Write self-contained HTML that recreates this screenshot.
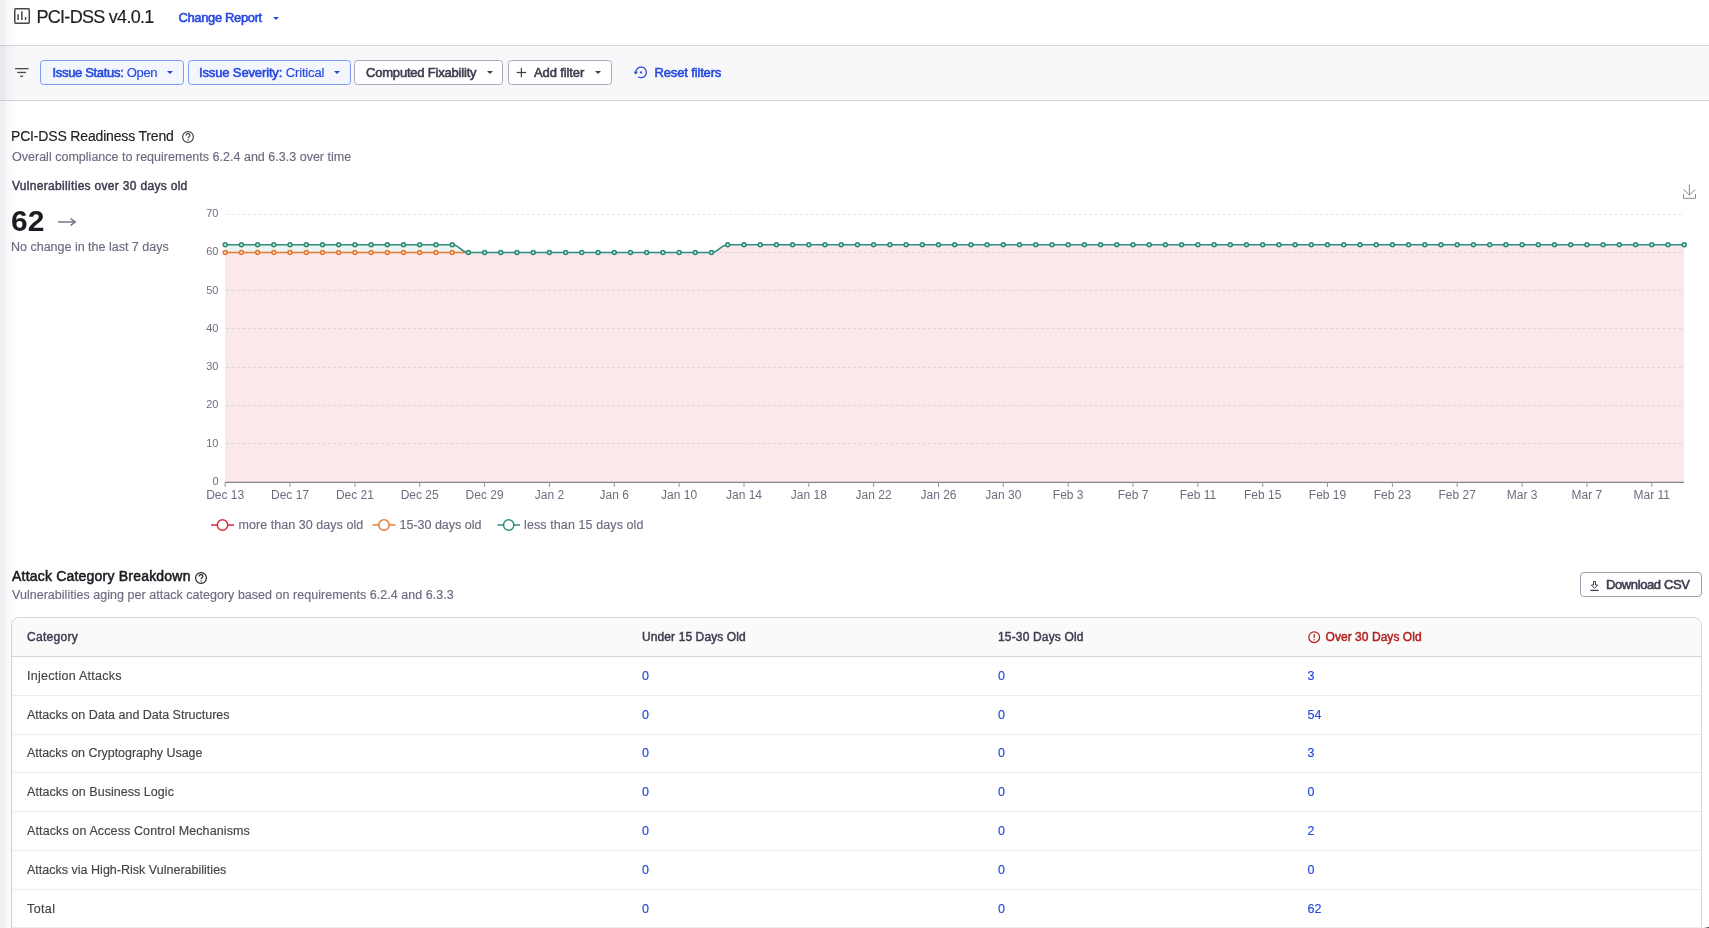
<!DOCTYPE html>
<html><head><meta charset="utf-8">
<style>
html,body{margin:0;padding:0;}
body{width:1709px;height:928px;overflow:hidden;background:#fff;position:relative;font-family:"Liberation Sans",sans-serif;}
#root{position:absolute;left:0;top:0;width:1709px;height:928px;overflow:hidden;will-change:transform;}
.t{position:absolute;white-space:nowrap;line-height:1;}
.shadow{position:absolute;left:0;top:0;width:18px;height:928px;background:linear-gradient(to right,rgba(70,60,110,0.06),rgba(70,60,110,0.09) 2.5px,rgba(70,60,110,0.045) 6px,rgba(70,60,110,0) 17px);z-index:50;}
.hdr{position:absolute;left:0;top:0;width:1709px;height:45px;background:#fff;border-bottom:1px solid #d8d8e0;}
.fbar{position:absolute;left:0;top:46px;width:1709px;height:54px;background:#f8f8fa;border-bottom:1px solid #d6d5de;}
.chip{position:absolute;top:60px;height:23px;border:1px solid #a9a8b8;border-radius:3.5px;background:#fff;box-sizing:content-box;}
.chip.b{border-color:#7c9cf2;background:#f3f6ff;}
.tri{position:absolute;width:0;height:0;border-left:3px solid transparent;border-right:3px solid transparent;border-top:3px solid #3d3c50;}
.tri.bl{border-top-color:#2448e0;}
.ct{font-size:13px;color:#3c3b4e;font-weight:bold;top:65.5px;}
.ct.bl{color:#2448e0;}
.sub{font-size:12.5px;color:#6b6a80;}
svg{position:absolute;left:0;top:0;}
.tbl{position:absolute;left:11px;top:617px;width:1689px;height:400px;border:1px solid #d5d4df;border-radius:8px;overflow:hidden;}
.th{position:absolute;left:0;top:0;width:1689px;height:38px;background:#fafafb;border-bottom:1px solid #d5d4df;}
.rl{position:absolute;left:0;width:1689px;height:1px;background:#ededf1;}
.cell{font-size:12.5px;color:#444447;}
.num{font-size:12.5px;color:#2448e0;}
.hd{font-size:12px;font-weight:bold;color:#3c3b4e;}
.m{font-weight:normal !important;-webkit-text-stroke:0.55px currentColor;}
.m span{-webkit-text-stroke:0.15px currentColor;}
.hd.m,#t15{-webkit-text-stroke:0.45px currentColor;}
.sub,.cell,.num,#t13,#t1{-webkit-text-stroke:0.15px currentColor;}
#t1{letter-spacing:-0.712px}#t2{letter-spacing:-0.373px}#t4{letter-spacing:-0.325px}#t6{letter-spacing:-0.137px}#t8{letter-spacing:-0.200px}#t10{letter-spacing:-0.114px}#t12{letter-spacing:-0.148px}#t13{letter-spacing:-0.168px}#t15{letter-spacing:0.311px}#t21{letter-spacing:0.204px}#t23{letter-spacing:-0.393px}#t24{letter-spacing:0.280px}#t25{letter-spacing:0.102px}#t26{letter-spacing:0.159px}#t27{letter-spacing:0.049px}#t14{letter-spacing:0.014px}#t16{letter-spacing:0.000px}#t17{letter-spacing:-0.004px}#t18{letter-spacing:0.050px}#t19{letter-spacing:-0.003px}#t20{letter-spacing:0.100px}#t22{letter-spacing:0.029px}#t28{letter-spacing:0.262px}#t32{letter-spacing:-0.012px}#t36{letter-spacing:-0.036px}#t40{letter-spacing:0.042px}#t44{letter-spacing:0.114px}#t48{letter-spacing:0.012px}#t52{letter-spacing:0.400px}
</style></head>
<body>
<div id="root">
<div class="hdr"></div>
<div class="fbar"></div>

<!-- header -->
<svg width="40" height="40" style="left:0;top:0">
  <rect x="14.75" y="8.75" width="14.5" height="14.5" rx="1" fill="none" stroke="#464646" stroke-width="1.5"/>
  <rect x="17.3" y="14.2" width="1.5" height="5.8" fill="#464646"/>
  <rect x="21.1" y="11.3" width="1.5" height="8.7" fill="#464646"/>
  <rect x="24.8" y="16.9" width="1.5" height="3.1" fill="#464646"/>
</svg>
<div id="t1" class="t" style="left:36.5px;top:8px;font-size:18px;color:#1b1b22;">PCI-DSS v4.0.1</div>
<div id="t2" class="t m" style="left:178.5px;top:10.5px;font-size:13px;font-weight:bold;color:#2448e0;">Change Report</div>
<div id="t3" class="tri bl" style="left:272.5px;top:16.5px;"></div>

<!-- filter bar -->
<svg width="40" height="100" style="left:0;top:0">
  <rect x="15" y="68" width="13.6" height="1.3" fill="#4a4a4a"/>
  <rect x="17.2" y="71.8" width="8.8" height="1.3" fill="#4a4a4a"/>
  <rect x="20.1" y="75.6" width="3" height="1.3" fill="#4a4a4a"/>
</svg>
<div class="chip b" style="left:40px;width:142px;"></div>
<div id="t4" class="t ct bl m" style="left:52.5px;">Issue Status: <span>Open</span></div>
<div id="t5" class="tri bl" style="left:167px;top:70.8px;"></div>

<div class="chip b" style="left:188px;width:161px;"></div>
<div id="t6" class="t ct bl m" style="left:199px;">Issue Severity: <span>Critical</span></div>
<div id="t7" class="tri bl" style="left:334px;top:70.8px;"></div>

<div class="chip" style="left:354px;width:147px;"></div>
<div id="t8" class="t ct m" style="left:366px;">Computed Fixability</div>
<div id="t9" class="tri" style="left:487px;top:70.8px;"></div>

<div class="chip" style="left:508px;width:102px;"></div>
<svg width="20" height="20" style="left:512px;top:62px">
  <rect x="4.7" y="9.9" width="9.4" height="1.2" fill="#3d3c50"/>
  <rect x="8.8" y="5.8" width="1.2" height="9.4" fill="#3d3c50"/>
</svg>
<div id="t10" class="t ct m" style="left:534px;">Add filter</div>
<div id="t11" class="tri" style="left:595px;top:70.8px;"></div>

<svg width="20" height="20" style="left:632px;top:62px">
  <path d="M3.8,10.4 A5.3,5.3 0 1 1 6.06,14.74" fill="none" stroke="#2448e0" stroke-width="1.3"/>
  <path d="M1.6,9.7 L6,9.7 L3.8,12.6 Z" fill="#2448e0"/>
  <circle cx="9.1" cy="10.4" r="1.1" fill="#2448e0"/>
</svg>
<div id="t12" class="t ct bl m" style="left:654.5px;">Reset filters</div>

<!-- section 1 -->
<div id="t13" class="t" style="left:11px;top:129px;font-size:14px;color:#1b1b22;">PCI-DSS Readiness Trend</div>
<svg width="30" height="30" style="left:173px;top:122px">
  <circle cx="15" cy="15" r="5.4" fill="none" stroke="#444" stroke-width="1.2"/>
  <path d="M13.1,13.6 C13.1,12.3 14,11.7 15,11.7 C16,11.7 16.9,12.3 16.9,13.3 C16.9,14.6 15.1,14.7 15.1,16.3" fill="none" stroke="#444" stroke-width="1.2"/>
  <rect x="14.5" y="17.3" width="1.2" height="1.2" fill="#444"/>
</svg>
<div id="t14" class="t sub" style="left:12px;top:150.5px;">Overall compliance to requirements 6.2.4 and 6.3.3 over time</div>
<div id="t15" class="t m" style="left:12px;top:179.5px;font-size:12px;font-weight:bold;color:#3d3c4f;">Vulnerabilities over 30 days old</div>
<div id="t16" class="t" style="left:11px;top:206px;font-size:30px;font-weight:bold;color:#1b1b22;">62</div>
<svg width="30" height="20" style="left:50px;top:212px">
  <rect x="8" y="9.3" width="16" height="1.4" fill="#6b6a80"/>
  <path d="M20.5,6.5 L25.2,10 L20.5,13.5" fill="none" stroke="#6b6a80" stroke-width="1.4"/>
</svg>
<div id="t17" class="t sub" style="left:11px;top:240.5px;">No change in the last 7 days</div>

<svg width="1709" height="560" style="left:0;top:0">
  <g stroke="#e3e5f2" stroke-width="1" stroke-dasharray="3,2.36"><line x1="225.9" x2="1684" y1="443.5" y2="443.5"/><line x1="225.9" x2="1684" y1="405.5" y2="405.5"/><line x1="225.9" x2="1684" y1="367.5" y2="367.5"/><line x1="225.9" x2="1684" y1="328.5" y2="328.5"/><line x1="225.9" x2="1684" y1="290.5" y2="290.5"/><line x1="225.9" x2="1684" y1="252.5" y2="252.5"/><line x1="225.9" x2="1684" y1="214.5" y2="214.5"/></g>
  <path d="M225.2,244.81L452.15,244.81C459.45,244.81,461.07,252.46,468.36,252.46L225.2,252.46Z" fill="#2e8d7b" fill-opacity="0.1"/>
  <path d="M225.2,252.46L711.53,252.46C718.82,252.46,720.45,244.81,727.74,244.81L1684.19,244.81L1684.19,482L225.2,482Z" fill="#d92a3c" fill-opacity="0.11"/>
  <g fill="#6e6d80" font-family="Liberation Sans" font-size="11" text-anchor="end"><text x="218.5" y="484.8">0</text><text x="218.5" y="446.5">10</text><text x="218.5" y="408.3">20</text><text x="218.5" y="370.0">30</text><text x="218.5" y="331.8">40</text><text x="218.5" y="293.5">50</text><text x="218.5" y="255.3">60</text><text x="218.5" y="217.0">70</text></g>
  <line x1="225" x2="1684" y1="482.4" y2="482.4" stroke="#84828f" stroke-width="1.1"/>
  <g stroke="#9795a1" stroke-width="1"><line x1="225.2" x2="225.2" y1="482" y2="487"/><line x1="290.0" x2="290.0" y1="482" y2="487"/><line x1="354.9" x2="354.9" y1="482" y2="487"/><line x1="419.7" x2="419.7" y1="482" y2="487"/><line x1="484.6" x2="484.6" y1="482" y2="487"/><line x1="549.4" x2="549.4" y1="482" y2="487"/><line x1="614.3" x2="614.3" y1="482" y2="487"/><line x1="679.1" x2="679.1" y1="482" y2="487"/><line x1="744.0" x2="744.0" y1="482" y2="487"/><line x1="808.8" x2="808.8" y1="482" y2="487"/><line x1="873.6" x2="873.6" y1="482" y2="487"/><line x1="938.5" x2="938.5" y1="482" y2="487"/><line x1="1003.3" x2="1003.3" y1="482" y2="487"/><line x1="1068.2" x2="1068.2" y1="482" y2="487"/><line x1="1133.0" x2="1133.0" y1="482" y2="487"/><line x1="1197.9" x2="1197.9" y1="482" y2="487"/><line x1="1262.7" x2="1262.7" y1="482" y2="487"/><line x1="1327.5" x2="1327.5" y1="482" y2="487"/><line x1="1392.4" x2="1392.4" y1="482" y2="487"/><line x1="1457.2" x2="1457.2" y1="482" y2="487"/><line x1="1522.1" x2="1522.1" y1="482" y2="487"/><line x1="1586.9" x2="1586.9" y1="482" y2="487"/><line x1="1651.8" x2="1651.8" y1="482" y2="487"/></g>
  <g fill="#6e6d80" font-family="Liberation Sans" font-size="12" text-anchor="middle"><text x="225.2" y="498.5">Dec 13</text><text x="290.0" y="498.5">Dec 17</text><text x="354.9" y="498.5">Dec 21</text><text x="419.7" y="498.5">Dec 25</text><text x="484.6" y="498.5">Dec 29</text><text x="549.4" y="498.5">Jan 2</text><text x="614.3" y="498.5">Jan 6</text><text x="679.1" y="498.5">Jan 10</text><text x="744.0" y="498.5">Jan 14</text><text x="808.8" y="498.5">Jan 18</text><text x="873.6" y="498.5">Jan 22</text><text x="938.5" y="498.5">Jan 26</text><text x="1003.3" y="498.5">Jan 30</text><text x="1068.2" y="498.5">Feb 3</text><text x="1133.0" y="498.5">Feb 7</text><text x="1197.9" y="498.5">Feb 11</text><text x="1262.7" y="498.5">Feb 15</text><text x="1327.5" y="498.5">Feb 19</text><text x="1392.4" y="498.5">Feb 23</text><text x="1457.2" y="498.5">Feb 27</text><text x="1522.1" y="498.5">Mar 3</text><text x="1586.9" y="498.5">Mar 7</text><text x="1651.8" y="498.5">Mar 11</text></g>
  <path d="M225.2,252.46L468.36,252.46" fill="none" stroke="#e57a36" stroke-width="1.6"/>
  <g fill="#fff" stroke="#e57a36" stroke-width="1.7"><circle cx="225.2" cy="252.5" r="1.9"/><circle cx="241.4" cy="252.5" r="1.9"/><circle cx="257.6" cy="252.5" r="1.9"/><circle cx="273.8" cy="252.5" r="1.9"/><circle cx="290.0" cy="252.5" r="1.9"/><circle cx="306.3" cy="252.5" r="1.9"/><circle cx="322.5" cy="252.5" r="1.9"/><circle cx="338.7" cy="252.5" r="1.9"/><circle cx="354.9" cy="252.5" r="1.9"/><circle cx="371.1" cy="252.5" r="1.9"/><circle cx="387.3" cy="252.5" r="1.9"/><circle cx="403.5" cy="252.5" r="1.9"/><circle cx="419.7" cy="252.5" r="1.9"/><circle cx="435.9" cy="252.5" r="1.9"/><circle cx="452.2" cy="252.5" r="1.9"/></g>
  <path d="M225.2,244.81L452.15,244.81C459.45,244.81,461.07,252.46,468.36,252.46L711.53,252.46C718.82,252.46,720.45,244.81,727.74,244.81L1684.19,244.81" fill="none" stroke="#2e8d7b" stroke-width="1.6"/>
  <g fill="#fff" stroke="#2e8d7b" stroke-width="1.7"><circle cx="225.2" cy="244.8" r="1.9"/><circle cx="241.4" cy="244.8" r="1.9"/><circle cx="257.6" cy="244.8" r="1.9"/><circle cx="273.8" cy="244.8" r="1.9"/><circle cx="290.0" cy="244.8" r="1.9"/><circle cx="306.3" cy="244.8" r="1.9"/><circle cx="322.5" cy="244.8" r="1.9"/><circle cx="338.7" cy="244.8" r="1.9"/><circle cx="354.9" cy="244.8" r="1.9"/><circle cx="371.1" cy="244.8" r="1.9"/><circle cx="387.3" cy="244.8" r="1.9"/><circle cx="403.5" cy="244.8" r="1.9"/><circle cx="419.7" cy="244.8" r="1.9"/><circle cx="435.9" cy="244.8" r="1.9"/><circle cx="452.2" cy="244.8" r="1.9"/><circle cx="468.4" cy="252.5" r="1.9"/><circle cx="484.6" cy="252.5" r="1.9"/><circle cx="500.8" cy="252.5" r="1.9"/><circle cx="517.0" cy="252.5" r="1.9"/><circle cx="533.2" cy="252.5" r="1.9"/><circle cx="549.4" cy="252.5" r="1.9"/><circle cx="565.6" cy="252.5" r="1.9"/><circle cx="581.8" cy="252.5" r="1.9"/><circle cx="598.1" cy="252.5" r="1.9"/><circle cx="614.3" cy="252.5" r="1.9"/><circle cx="630.5" cy="252.5" r="1.9"/><circle cx="646.7" cy="252.5" r="1.9"/><circle cx="662.9" cy="252.5" r="1.9"/><circle cx="679.1" cy="252.5" r="1.9"/><circle cx="695.3" cy="252.5" r="1.9"/><circle cx="711.5" cy="252.5" r="1.9"/><circle cx="727.7" cy="244.8" r="1.9"/><circle cx="744.0" cy="244.8" r="1.9"/><circle cx="760.2" cy="244.8" r="1.9"/><circle cx="776.4" cy="244.8" r="1.9"/><circle cx="792.6" cy="244.8" r="1.9"/><circle cx="808.8" cy="244.8" r="1.9"/><circle cx="825.0" cy="244.8" r="1.9"/><circle cx="841.2" cy="244.8" r="1.9"/><circle cx="857.4" cy="244.8" r="1.9"/><circle cx="873.6" cy="244.8" r="1.9"/><circle cx="889.9" cy="244.8" r="1.9"/><circle cx="906.1" cy="244.8" r="1.9"/><circle cx="922.3" cy="244.8" r="1.9"/><circle cx="938.5" cy="244.8" r="1.9"/><circle cx="954.7" cy="244.8" r="1.9"/><circle cx="970.9" cy="244.8" r="1.9"/><circle cx="987.1" cy="244.8" r="1.9"/><circle cx="1003.3" cy="244.8" r="1.9"/><circle cx="1019.5" cy="244.8" r="1.9"/><circle cx="1035.8" cy="244.8" r="1.9"/><circle cx="1052.0" cy="244.8" r="1.9"/><circle cx="1068.2" cy="244.8" r="1.9"/><circle cx="1084.4" cy="244.8" r="1.9"/><circle cx="1100.6" cy="244.8" r="1.9"/><circle cx="1116.8" cy="244.8" r="1.9"/><circle cx="1133.0" cy="244.8" r="1.9"/><circle cx="1149.2" cy="244.8" r="1.9"/><circle cx="1165.4" cy="244.8" r="1.9"/><circle cx="1181.6" cy="244.8" r="1.9"/><circle cx="1197.9" cy="244.8" r="1.9"/><circle cx="1214.1" cy="244.8" r="1.9"/><circle cx="1230.3" cy="244.8" r="1.9"/><circle cx="1246.5" cy="244.8" r="1.9"/><circle cx="1262.7" cy="244.8" r="1.9"/><circle cx="1278.9" cy="244.8" r="1.9"/><circle cx="1295.1" cy="244.8" r="1.9"/><circle cx="1311.3" cy="244.8" r="1.9"/><circle cx="1327.5" cy="244.8" r="1.9"/><circle cx="1343.8" cy="244.8" r="1.9"/><circle cx="1360.0" cy="244.8" r="1.9"/><circle cx="1376.2" cy="244.8" r="1.9"/><circle cx="1392.4" cy="244.8" r="1.9"/><circle cx="1408.6" cy="244.8" r="1.9"/><circle cx="1424.8" cy="244.8" r="1.9"/><circle cx="1441.0" cy="244.8" r="1.9"/><circle cx="1457.2" cy="244.8" r="1.9"/><circle cx="1473.4" cy="244.8" r="1.9"/><circle cx="1489.7" cy="244.8" r="1.9"/><circle cx="1505.9" cy="244.8" r="1.9"/><circle cx="1522.1" cy="244.8" r="1.9"/><circle cx="1538.3" cy="244.8" r="1.9"/><circle cx="1554.5" cy="244.8" r="1.9"/><circle cx="1570.7" cy="244.8" r="1.9"/><circle cx="1586.9" cy="244.8" r="1.9"/><circle cx="1603.1" cy="244.8" r="1.9"/><circle cx="1619.3" cy="244.8" r="1.9"/><circle cx="1635.6" cy="244.8" r="1.9"/><circle cx="1651.8" cy="244.8" r="1.9"/><circle cx="1668.0" cy="244.8" r="1.9"/><circle cx="1684.2" cy="244.8" r="1.9"/></g>
  <!-- download icon -->
  <g fill="none" stroke="#8a8a8a" stroke-width="1">
    <path d="M1689.4,184.6 V195"/>
    <path d="M1683.5,189.5 L1689.4,195 L1695.3,189.5"/>
    <path d="M1683.5,194 V198.3 H1695.5 V194"/>
  </g>
  <!-- legend -->
  <g stroke-width="1.5" fill="#fff">
    <line x1="211" x2="234" y1="525" y2="525" stroke="#d92a3c"/>
    <circle cx="222.5" cy="525" r="5.2" stroke="#d92a3c"/>
    <line x1="372.5" x2="395.5" y1="525" y2="525" stroke="#e57a36"/>
    <circle cx="384" cy="525" r="5.2" stroke="#e57a36"/>
    <line x1="497.5" x2="520" y1="525" y2="525" stroke="#2e8d7b"/>
    <circle cx="508.7" cy="525" r="5.2" stroke="#2e8d7b"/>
  </g>
</svg>
<div id="t18" class="t sub" style="left:238.5px;top:518.5px;">more than 30 days old</div>
<div id="t19" class="t sub" style="left:399.5px;top:518.5px;">15-30 days old</div>
<div id="t20" class="t sub" style="left:524px;top:518.5px;">less than 15 days old</div>

<!-- section 2 -->
<div id="t21" class="t m" style="left:12px;top:569px;font-size:14px;font-weight:bold;color:#1b1b22;">Attack Category Breakdown</div>
<svg width="30" height="30" style="left:186px;top:563px">
  <circle cx="15" cy="15" r="5.4" fill="none" stroke="#222" stroke-width="1.2"/>
  <path d="M13.1,13.6 C13.1,12.3 14,11.7 15,11.7 C16,11.7 16.9,12.3 16.9,13.3 C16.9,14.6 15.1,14.7 15.1,16.3" fill="none" stroke="#222" stroke-width="1.2"/>
  <rect x="14.5" y="17.3" width="1.2" height="1.2" fill="#222"/>
</svg>
<div id="t22" class="t sub" style="left:12px;top:588.5px;">Vulnerabilities aging per attack category based on requirements 6.2.4 and 6.3.3</div>

<div class="btn" style="position:absolute;left:1580px;top:572px;width:120px;height:23px;border:1px solid #a09fb0;border-radius:4px;background:#fff;"></div>
<svg width="20" height="20" style="left:1584px;top:576px">
  <path d="M9.5,5.5 H11.5 V9 H13.6 L10.5,12.3 L7.4,9 H9.5 Z" fill="none" stroke="#3c3b4e" stroke-width="1"/>
  <rect x="6.3" y="13.8" width="8.3" height="1.2" fill="#3c3b4e"/>
</svg>
<div id="t23" class="t ct m" style="left:1606px;top:577.5px;">Download CSV</div>

<div class="tbl">
  <div class="th"></div>
  <div class="rl" style="top:77px"></div>
  <div class="rl" style="top:116px"></div>
  <div class="rl" style="top:154px"></div>
  <div class="rl" style="top:193px"></div>
  <div class="rl" style="top:232px"></div>
  <div class="rl" style="top:271px"></div>
  <div class="rl" style="top:309px"></div>
</div>
<div id="t24" class="t hd m" style="left:27px;top:631px;">Category</div>
<div id="t25" class="t hd m" style="left:642px;top:631px;">Under 15 Days Old</div>
<div id="t26" class="t hd m" style="left:998px;top:631px;">15-30 Days Old</div>
<svg width="20" height="20" style="left:1304px;top:627px">
  <circle cx="10.2" cy="10.2" r="5.4" fill="none" stroke="#b0201f" stroke-width="1.2"/>
  <rect x="9.6" y="7" width="1.2" height="4" fill="#b0201f"/>
  <rect x="9.6" y="12.2" width="1.2" height="1.2" fill="#b0201f"/>
</svg>
<div id="t27" class="t hd m" style="left:1325.5px;top:631px;color:#b0201f;">Over 30 Days Old</div>

<div id="t28" class="t cell" style="left:27px;top:669.5px;">Injection Attacks</div>
<div id="t29" class="t num" style="left:642px;top:669.5px;">0</div>
<div id="t30" class="t num" style="left:998px;top:669.5px;">0</div>
<div id="t31" class="t num" style="left:1307.5px;top:669.5px;">3</div>

<div id="t32" class="t cell" style="left:27px;top:708.5px;">Attacks on Data and Data Structures</div>
<div id="t33" class="t num" style="left:642px;top:708.5px;">0</div>
<div id="t34" class="t num" style="left:998px;top:708.5px;">0</div>
<div id="t35" class="t num" style="left:1307.5px;top:708.5px;">54</div>

<div id="t36" class="t cell" style="left:27px;top:747px;">Attacks on Cryptography Usage</div>
<div id="t37" class="t num" style="left:642px;top:747px;">0</div>
<div id="t38" class="t num" style="left:998px;top:747px;">0</div>
<div id="t39" class="t num" style="left:1307.5px;top:747px;">3</div>

<div id="t40" class="t cell" style="left:27px;top:786px;">Attacks on Business Logic</div>
<div id="t41" class="t num" style="left:642px;top:786px;">0</div>
<div id="t42" class="t num" style="left:998px;top:786px;">0</div>
<div id="t43" class="t num" style="left:1307.5px;top:786px;">0</div>

<div id="t44" class="t cell" style="left:27px;top:824.5px;">Attacks on Access Control Mechanisms</div>
<div id="t45" class="t num" style="left:642px;top:824.5px;">0</div>
<div id="t46" class="t num" style="left:998px;top:824.5px;">0</div>
<div id="t47" class="t num" style="left:1307.5px;top:824.5px;">2</div>

<div id="t48" class="t cell" style="left:27px;top:863.5px;">Attacks via High-Risk Vulnerabilities</div>
<div id="t49" class="t num" style="left:642px;top:863.5px;">0</div>
<div id="t50" class="t num" style="left:998px;top:863.5px;">0</div>
<div id="t51" class="t num" style="left:1307.5px;top:863.5px;">0</div>

<div id="t52" class="t cell" style="left:27px;top:903px;">Total</div>
<div id="t53" class="t num" style="left:642px;top:903px;">0</div>
<div id="t54" class="t num" style="left:998px;top:903px;">0</div>
<div id="t55" class="t num" style="left:1307.5px;top:903px;">62</div>

<div class="shadow"></div>
<div style="position:absolute;left:1704px;top:927px;width:5px;height:1px;background:linear-gradient(to right,rgba(40,40,40,0),#333);"></div>
</div>
</body></html>
